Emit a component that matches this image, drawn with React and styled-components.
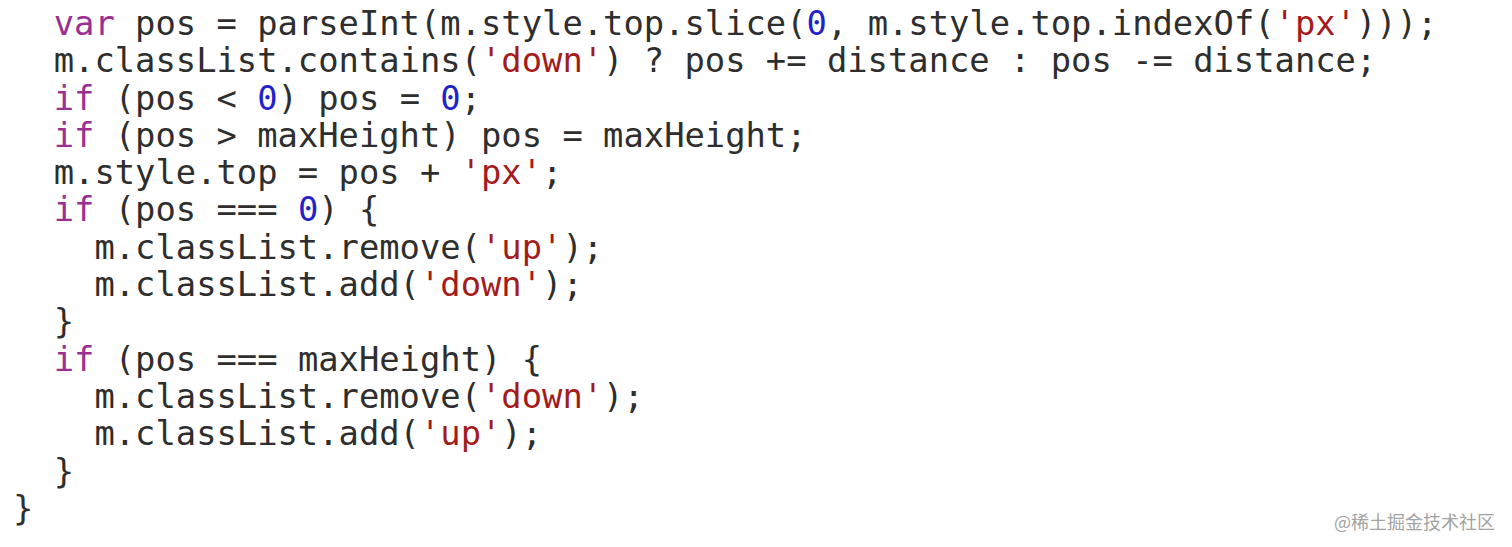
import React from "react";
import styled, { createGlobalStyle } from "styled-components";

const GlobalStyle = createGlobalStyle`
  html, body {
    margin: 0;
    padding: 0;
    background: #ffffff;
  }
`;

const colors = {
  kw: "#9a2f93",
  num: "#2222cc",
  str: "#a31b1b",
  plain: "#2e2e2e",
};

const Page = styled.div`
  position: relative;
  width: 1512px;
  height: 547px;
  box-sizing: border-box;
  background: #ffffff;
  padding: 5px 0 0 13px;
  overflow: hidden;
`;

const CodeBlock = styled.pre`
  margin: 0;
  font-family: "DejaVu Sans Mono", "Liberation Mono", monospace;
  font-size: 33.8px;
  line-height: 37.3px;
  color: ${colors.plain};
  white-space: pre;
`;

const Line = styled.div`
  height: 37.3px;
`;

const Token = styled.span`
  color: ${(props) => colors[props.kind] || colors.plain};
`;

const Watermark = styled.div`
  position: absolute;
  right: 17px;
  bottom: 15px;
  font-family: "Noto Sans CJK SC", "Noto Sans", sans-serif;
  font-size: 18px;
  line-height: 22px;
  color: #a3a3a3;
`;

// each line: list of [kind, text]
const lines = [
  [["plain", "  "], ["kw", "var"], ["plain", " pos = parseInt(m.style.top.slice("], ["num", "0"], ["plain", ", m.style.top.indexOf("], ["str", "'px'"], ["plain", ")));"]],
  [["plain", "  m.classList.contains("], ["str", "'down'"], ["plain", ") ? pos += distance : pos -= distance;"]],
  [["plain", "  "], ["kw", "if"], ["plain", " (pos < "], ["num", "0"], ["plain", ") pos = "], ["num", "0"], ["plain", ";"]],
  [["plain", "  "], ["kw", "if"], ["plain", " (pos > maxHeight) pos = maxHeight;"]],
  [["plain", "  m.style.top = pos + "], ["str", "'px'"], ["plain", ";"]],
  [["plain", "  "], ["kw", "if"], ["plain", " (pos === "], ["num", "0"], ["plain", ") {"]],
  [["plain", "    m.classList.remove("], ["str", "'up'"], ["plain", ");"]],
  [["plain", "    m.classList.add("], ["str", "'down'"], ["plain", ");"]],
  [["plain", "  }"]],
  [["plain", "  "], ["kw", "if"], ["plain", " (pos === maxHeight) {"]],
  [["plain", "    m.classList.remove("], ["str", "'down'"], ["plain", ");"]],
  [["plain", "    m.classList.add("], ["str", "'up'"], ["plain", ");"]],
  [["plain", "  }"]],
  [["plain", "}"]],
];

export default function App() {
  return (
    <>
      <GlobalStyle />
      <Page>
        <CodeBlock>
          {lines.map((line, i) => (
            <Line key={i}>
              {line.map(([kind, text], j) => (
                <Token key={j} kind={kind}>
                  {text}
                </Token>
              ))}
            </Line>
          ))}
        </CodeBlock>
        <Watermark>@稀土掘金技术社区</Watermark>
      </Page>
    </>
  );
}
